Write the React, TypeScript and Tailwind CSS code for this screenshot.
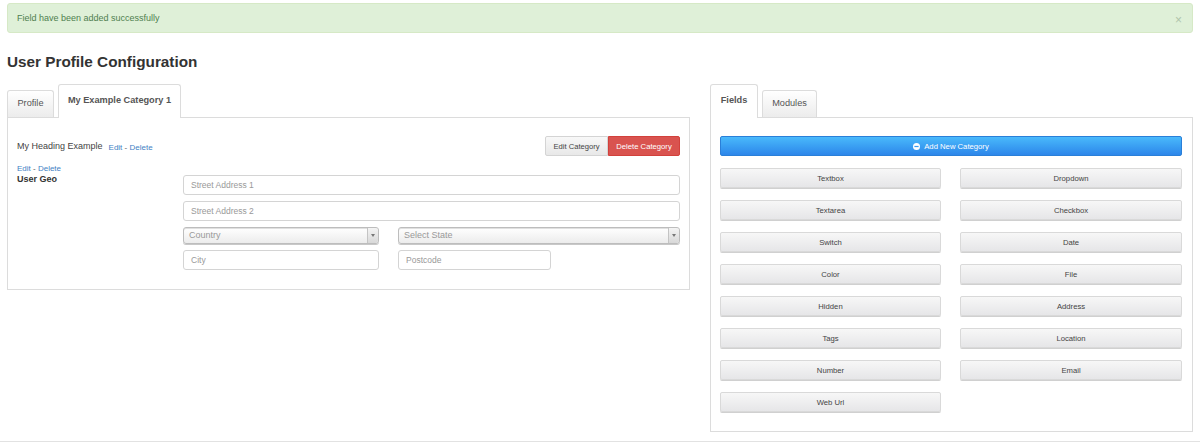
import React from "react";

const font = "font-['Liberation_Sans',Arial,sans-serif]";

function TextInput({ placeholder, className = "" }: { placeholder: string; className?: string }) {
  return (
    <div className={`h-5 border border-[#d4d4d4] rounded-[3px] bg-white pl-[7px] flex items-center text-[8.5px] text-[#999] ${className}`}>
      {placeholder}
    </div>
  );
}

function SelectBox({ placeholder, className = "" }: { placeholder: string; className?: string }) {
  return (
    <div className={`h-[17px] border border-[#bdbdbd] rounded-[3px] bg-gradient-to-b from-white to-[#ececec] shadow-[inset_0_1px_0_#e0e0e0,0_1px_0_#c8c8c8] flex items-center justify-between text-[9px] text-[#999] ${className}`}>
      <span className="pl-[5px] pt-px">{placeholder}</span>
      <span className="w-[11px] h-full border-l border-[#c4c4c4] bg-gradient-to-b from-[#f4f4f4] to-[#d8d8d8] rounded-r-[3px] flex items-center justify-center">
        <span className="w-0 h-0 border-l-[2px] border-r-[2px] border-t-[3px] border-l-transparent border-r-transparent border-t-[#777]" />
      </span>
    </div>
  );
}

function FieldButton({ label }: { label: string }) {
  return (
    <div className="h-5 pt-px border border-[#d9d9d9] rounded-[2px] bg-gradient-to-b from-[#f7f7f7] to-[#e6e6e8] shadow-[0_1px_0_#d0d0d0] flex items-center justify-center text-[7.7px] text-[#444]">
      {label}
    </div>
  );
}

function Tab({ label, active, className = "" }: { label: string; active?: boolean; className?: string }) {
  return active ? (
    <div className={`h-[34px] -mb-px relative z-10 bg-white border border-b-0 border-[#dcdcdc] rounded-t-[3px] pt-[9px] text-[9.2px] font-bold text-[#555] text-center ${className}`}>
      {label}
    </div>
  ) : (
    <div className={`h-[27px] border border-b-0 border-[#dcdcdc] rounded-t-[3px] bg-gradient-to-b from-white to-[#ececec] pt-[6px] text-[9.2px] text-[#555] text-center ${className}`}>
      {label}
    </div>
  );
}

const links = "text-[8px] text-[#3f7fc4]";

export default function App() {
  const rows = [
    ["Textbox", "Dropdown"],
    ["Textarea", "Checkbox"],
    ["Switch", "Date"],
    ["Color", "File"],
    ["Hidden", "Address"],
    ["Tags", "Location"],
    ["Number", "Email"],
    ["Web Url", ""],
  ];
  return (
    <div className={`${font} w-[1200px] h-[442px] bg-white overflow-hidden flex flex-col`}>
      <div className="mt-[3px] mx-[7px] h-[30px] bg-[#dff0d8] border border-[#d6e9c6] rounded-[3px] flex items-center justify-between pl-[9px] pr-[10px] text-[9px] text-[#4f7f4f]">
        <span className="pt-px">Field have been added successfully</span>
        <span className="text-[12px] leading-none text-[#b0c4ab] mt-[3px]">×</span>
      </div>

      <h1 className="mt-[20px] ml-[7px] text-[15.3px] leading-[18px] font-bold text-[#333]">User Profile Configuration</h1>

      <div className="mt-[13px] px-[7px] flex gap-[20px] items-start">
        <div className="w-[683px]">
          <div className="flex items-end gap-[4px]">
            <Tab label="Profile" className="w-[47px]" />
            <Tab label="My Example Category 1" active className="w-[123px]" />
          </div>
          <div className="h-[173px] border border-[#dcdcdc] px-[9px] pt-[18px]">
            <div className="flex justify-between items-start">
              <div className="flex items-center h-5 pt-[2px] text-[9px] text-[#444]">
                <span>My Heading Example</span>
                <span className={`${links} ml-[6px] mt-[2px]`}>Edit <span className="text-[#555]">-</span> Delete</span>
              </div>
              <div className="flex h-5">
                <div className="w-[63px] pt-px border border-[#d4d4d4] rounded-l-[2px] bg-gradient-to-b from-[#f8f8f8] to-[#e8e8e8] flex items-center justify-center text-[7.6px] text-[#444]">Edit Category</div>
                <div className="w-[72px] pt-px border border-[#d2413c] rounded-r-[2px] bg-[#d9534f] flex items-center justify-center text-[7.7px] text-white">Delete Category</div>
              </div>
            </div>
            <div className="flex mt-[9px]">
              <div className="w-[166px] -mt-[1px]">
                <div className={`${links} leading-[10px]`}>Edit <span className="text-[#555]">-</span> Delete</div>
                <div className="text-[9px] leading-[9px] mt-[1px] font-bold text-[#333]">User Geo</div>
              </div>
              <div className="flex-1 flex flex-col gap-[6px] mt-[10px]">
                <TextInput placeholder="Street Address 1" />
                <TextInput placeholder="Street Address 2" />
                <div className="flex gap-[19px]">
                  <SelectBox placeholder="Country" className="w-[196px]" />
                  <SelectBox placeholder="Select State" className="flex-1" />
                </div>
                <div className="flex gap-[19px]">
                  <TextInput placeholder="City" className="w-[196px]" />
                  <TextInput placeholder="Postcode" className="w-[153px]" />
                </div>
              </div>
            </div>
          </div>
        </div>

        <div className="w-[483px]">
          <div className="flex items-end gap-[4px]">
            <Tab label="Fields" active className="w-[48px]" />
            <Tab label="Modules" className="w-[55px]" />
          </div>
          <div className="h-[315px] border border-[#dcdcdc] pl-[9px] pr-[10px] pt-[18px]">
            <div className="h-5 pt-px rounded-[2px] border border-[#2a7fd8] bg-gradient-to-b from-[#4ab9fb] to-[#2d86ea] flex items-center justify-center gap-[4px] text-[7.7px] text-white">
              <svg width="7" height="7" viewBox="0 0 8 8">
                <circle cx="4" cy="4" r="4" fill="#fff" />
                <rect x="1.6" y="3.3" width="4.8" height="1.4" fill="#3a9bf0" />
              </svg>
              Add New Category
            </div>
            <div className="grid grid-cols-[221px_222px] gap-x-[19px] gap-y-[12px] mt-[12px]">
              {rows.flatMap((r) =>
                r.map((l, i) => (l ? <FieldButton key={l} label={l} /> : <div key={i} />))
              )}
            </div>
          </div>
        </div>
      </div>

      <div className="mt-[9px] h-px bg-[#e2e2e2]" />
    </div>
  );
}
